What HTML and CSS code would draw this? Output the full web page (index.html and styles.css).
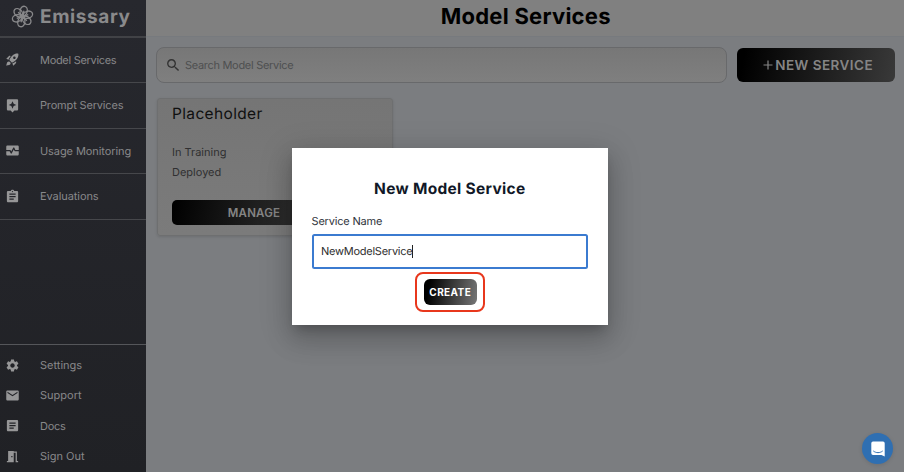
FILE: index.html
```html
<!DOCTYPE html>
<html lang="en">
<head>
<meta charset="utf-8">
<title>Emissary</title>
<link rel="stylesheet" href="styles.css">
</head>
<body>
<div class="app">
  <aside class="sidebar">
    <div class="brand">
      <svg class="logo" viewBox="0 0 24 24" fill="none" stroke="currentColor" stroke-width="1.4">
        <g id="petals">
          <ellipse cx="12" cy="6" rx="3.7" ry="4.900" transform="rotate(12 12 12)"/>
          <ellipse cx="12" cy="6" rx="3.7" ry="4.900" transform="rotate(72 12 12)"/>
          <ellipse cx="12" cy="6" rx="3.7" ry="4.900" transform="rotate(132 12 12)"/>
          <ellipse cx="12" cy="6" rx="3.7" ry="4.900" transform="rotate(192 12 12)"/>
          <ellipse cx="12" cy="6" rx="3.7" ry="4.900" transform="rotate(252 12 12)"/>
          <ellipse cx="12" cy="6" rx="3.7" ry="4.900" transform="rotate(312 12 12)"/>
        </g>
        <path d="M12 12L13.6 6M12 12L18 10M12 12L16.500 16.500M12 12L10.4 18M12 12L6 14M12 12L7.500 7.500"/>
        <circle cx="12" cy="12" r="1.7" fill="currentColor"/>
      </svg>
      <span class="brand-name">Emissary</span>
    </div>
    <nav class="nav">
      <a class="nav-item"><svg class="icon" viewBox="0 0 24 24"><path d="M9.19 6.35c-2.04 2.29-3.44 5.58-3.57 5.89L2 10.69l4.05-4.05c.47-.47 1.15-.68 1.81-.55l1.33.26zM11.17 17s3.74-1.55 5.89-3.7c5.4-5.4 4.5-9.62 4.21-10.57-.95-.3-5.17-1.19-10.57 4.21C8.55 9.09 7 12.83 7 12.83L11.17 17zm6.48-2.19c-2.29 2.04-5.58 3.44-5.89 3.57L13.31 22l4.05-4.05c.47-.47.68-1.15.55-1.81l-.26-1.33zM9 18c0 .83-.34 1.58-.88 2.12C6.94 21.3 2 22 2 22s.7-4.94 1.88-6.12C4.42 15.34 5.17 15 6 15c1.66 0 3 1.34 3 3zm4-9c0-1.1.9-2 2-2s2 .9 2 2-.9 2-2 2-2-.9-2-2z"/></svg><span class="label l-model">Model Services</span></a>
      <a class="nav-item"><svg class="icon" viewBox="0 0 24 24"><path d="M19 2H5c-1.1 0-2 .9-2 2v14c0 1.1.9 2 2 2h4l3 3 3-3h4c1.1 0 2-.9 2-2V4c0-1.1-.9-2-2-2zm-5.12 10.88L12 17l-1.88-4.12L6 11l4.12-1.88L12 5l1.88 4.12L18 11l-4.12 1.88z"/></svg><span class="label l-prompt">Prompt Services</span></a>
      <a class="nav-item"><svg class="icon" viewBox="0 0 24 24"><path d="M15.11 12.45 14 10.24l-3.11 6.21c-.16.34-.51.55-.89.55s-.73-.21-.89-.55L7.38 13H2v5c0 1.1.9 2 2 2h16c1.1 0 2-.9 2-2v-5h-6c-.38 0-.73-.21-.89-.55z"/><path d="M20 4H4c-1.1 0-2 .9-2 2v5h6c.38 0 .73.21.89.55L10 13.76l3.11-6.21c.34-.68 1.45-.68 1.79 0L16.62 11H22V6c0-1.1-.9-2-2-2z"/></svg><span class="label l-usage">Usage Monitoring</span></a>
      <a class="nav-item"><svg class="icon" viewBox="0 0 24 24"><path d="M19 3h-4.18C14.4 1.84 13.3 1 12 1c-1.3 0-2.4.84-2.82 2H5c-1.1 0-2 .9-2 2v14c0 1.1.9 2 2 2h14c1.1 0 2-.9 2-2V5c0-1.1-.9-2-2-2zm-7 0c.55 0 1 .45 1 1s-.45 1-1 1-1-.45-1-1 .45-1 1-1zm2 14H7v-2h7v2zm3-4H7v-2h10v2zm0-4H7V7h10v2z"/></svg><span class="label l-eval">Evaluations</span></a>
    </nav>
    <nav class="footer-nav">
      <a class="foot-item"><svg class="icon" viewBox="0 0 24 24"><path d="M19.14 12.94c.04-.3.06-.61.06-.94 0-.32-.02-.64-.07-.94l2.03-1.58c.18-.14.23-.41.12-.61l-1.92-3.32c-.12-.22-.37-.29-.59-.22l-2.39.96c-.5-.38-1.03-.7-1.62-.94l-.36-2.54c-.04-.24-.24-.41-.48-.41h-3.84c-.24 0-.43.17-.47.41l-.36 2.54c-.59.24-1.13.57-1.62.94l-2.39-.96c-.22-.08-.47 0-.59.22L2.74 8.87c-.12.21-.08.47.12.61l2.03 1.58c-.05.3-.09.63-.09.94s.02.64.07.94l-2.03 1.58c-.18.14-.23.41-.12.61l1.92 3.32c.12.22.37.29.59.22l2.39-.96c.5.38 1.03.7 1.62.94l.36 2.54c.05.24.24.41.48.41h3.84c.24 0 .44-.17.47-.41l.36-2.54c.59-.24 1.13-.56 1.62-.94l2.39.96c.22.08.47 0 .59-.22l1.92-3.32c.12-.22.07-.47-.12-.61l-2.01-1.58zM12 15.6c-1.98 0-3.6-1.62-3.6-3.6s1.62-3.6 3.6-3.6 3.6 1.62 3.6 3.6-1.62 3.6-3.6 3.6z"/></svg><span class="label l-settings">Settings</span></a>
      <a class="foot-item"><svg class="icon" viewBox="0 0 24 24"><path d="M20 4H4c-1.1 0-1.99.9-1.99 2L2 18c0 1.1.9 2 2 2h16c1.1 0 2-.9 2-2V6c0-1.1-.9-2-2-2zm0 4-8 5-8-5V6l8 5 8-5v2z"/></svg><span class="label l-support">Support</span></a>
      <a class="foot-item"><svg class="icon" viewBox="0 0 24 24"><path d="M19 3H5c-1.1 0-2 .9-2 2v14c0 1.1.9 2 2 2h14c1.1 0 2-.9 2-2V5c0-1.1-.9-2-2-2zm-5 14H7v-2h7v2zm3-4H7v-2h10v2zm0-4H7V7h10v2z"/></svg><span class="label l-docs">Docs</span></a>
      <a class="foot-item"><svg class="icon" viewBox="0 0 24 24"><path d="M14 6v15H3v-2h2V3h9v1h5v15h2v2h-4V6h-3zm-4 5v2h2v-2h-2z"/></svg><span class="label l-sign">Sign Out</span></a>
    </nav>
  </aside>
  <main class="main">
    <header class="topbar"><h1 class="page-title">Model Services</h1></header>
    <div class="toolbar">
      <div class="search">
        <svg class="search-icon" viewBox="0 0 24 24"><path d="M15.5 14h-.79l-.28-.27C15.41 12.59 16 11.11 16 9.5 16 5.91 13.09 3 9.5 3S3 5.91 3 9.5 5.91 16 9.5 16c1.61 0 3.09-.59 4.23-1.57l.27.28v.79l5 4.99L20.49 19l-4.99-5zm-6 0C7.01 14 5 11.99 5 9.5S7.01 5 9.5 5 14 7.01 14 9.5 11.99 14 9.5 14z"/></svg>
        <span class="placeholder">Search Model Service</span>
      </div>
      <button class="new-service"><svg class="plus" viewBox="0 0 10 10"><path d="M5 .5v9M.5 5h9"/></svg><span class="new-label">NEW SERVICE</span></button>
    </div>
    <section class="card">
      <h2 class="card-title">Placeholder</h2>
      <p class="status s-training">In Training</p>
      <p class="status s-deployed">Deployed</p>
      <button class="manage"><span>MANAGE</span></button>
    </section>
  </main>
</div>
<div class="modal">
  <h2 class="modal-title">New Model Service</h2>
  <div class="field-label">Service Name</div>
  <div class="field"><span class="value">NewModelService</span><span class="caret"></span></div>
  <div class="highlight"><button class="create">CREATE</button></div>
</div>
<div class="chat">
  <svg class="chat-icon" viewBox="0 0 14 16"><path class="bubble" d="M2 .5h10a1.7 1.7 0 0 1 1.7 1.7V15.500L10.500 14H2A1.700 1.700 0 0 1 .3 12.300V2.200A1.700 1.700 0 0 1 2 .5z"/><path class="smile" d="M2.600 10.200c2.500 2 6.300 2 8.800 0"/></svg>
</div>
</body>
</html>
```
FILE: styles.css
```css
* { box-sizing: border-box; }
body {
  margin: 0;
  width: 904px;
  height: 472px;
  overflow: hidden;
  font-family: Inter, "Open Sans", sans-serif;
  font-size: 11px;
  text-rendering: geometricPrecision;
  background: #7b7d80;
}
h1, h2, p { margin: 0; }
button { border: 0; padding: 0; font-family: inherit; }
svg { display: block; flex: none; }

.app { display: flex; height: 472px; }
.sidebar {
  width: 145.5px;
  flex: none;
  display: flex;
  flex-direction: column;
  background: linear-gradient(#27282e, #202125);
  color: #88888a;
}
.brand {
  height: 37.5px;
  display: flex;
  align-items: center;
  padding: 0 0 3px 10.500px;
  border-bottom: 2px solid #414246;
}
.logo { width: 23px; height: 23px; }
.brand-name { margin-left: 6.500px; font-size: 19px; font-weight: 700; letter-spacing: .6px; color: #8a8a8b; }
.nav-item {
  height: 45.5px;
  display: flex;
  align-items: center;
  padding-left: 4.500px;
  border-bottom: 1px solid #46474b;
}
.icon { width: 15px; height: 15px; fill: #969697; }
.label { margin-left: 20.500px; white-space: nowrap; font-weight: 400; }
.l-model { letter-spacing: -.3px; }
.l-prompt { letter-spacing: -.16px; }
.l-usage, .l-eval { letter-spacing: -.08px; }
.l-docs { letter-spacing: -.3px; }
.footer-nav { margin-top: auto; height: 128px; border-top: 1px solid #55565a; padding-top: 5px; }
.foot-item { height: 30.3px; display: flex; align-items: center; padding-left: 4.500px; }

.main { flex: 1; min-width: 0; }
.topbar {
  height: 37px;
  display: flex;
  justify-content: center;
  align-items: center;
  padding: 0 0 2px 2px;
  background: #808080;
  border-bottom: 1px solid #777a7e;
}
.page-title { font-size: 22px; line-height: 28px; font-weight: 700; letter-spacing: .25px; color: #000; white-space: nowrap; }
.toolbar { display: flex; align-items: center; gap: 10px; padding: 10px 8.500px 0 10.900px; }
.search {
  width: 570.500px;
  height: 36px;
  display: flex;
  align-items: center;
  padding-left: 7.500px;
  border: 1px solid #68696b;
  border-radius: 8px;
  background: linear-gradient(#777777, #7f7f7f);
}
.search-icon { width: 16.500px; height: 16.500px; fill: #333; }
.placeholder { margin-left: 3.500px; color: #4e4f50; white-space: nowrap; letter-spacing: -.29px; }
.new-service {
  width: 158.500px;
  height: 33.500px;
  display: flex;
  align-items: center;
  justify-content: center;
  gap: 2px;
  padding-left: 4px;
  border-radius: 6px;
  background: linear-gradient(100deg, #000 5%, #393939);
  color: #858585;
}
.plus { width: 10px; height: 10px; stroke: #858585; stroke-width: 1.2; fill: none; }
.new-label { font-size: 13.500px; font-weight: 600; letter-spacing: .45px; white-space: nowrap; }
.card {
  width: 236.500px;
  height: 138px;
  margin: 15px 0 0 11px;
  padding: 5px 15px 0 14.500px;
  border: 1px solid #6e6f70;
  border-radius: 3px;
  background: linear-gradient(#757575, #7b7b7b);
  box-shadow: 0 1px 3px rgba(0, 0, 0, .12);
}
.card-title { font-size: 15.500px; line-height: 20px; font-weight: 400; letter-spacing: .35px; color: #101010; }
.status { line-height: 20px; color: #303031; }
.s-training { margin-top: 18px; }
.manage {
  width: 164px;
  height: 25px;
  margin-top: 18px;
  border-radius: 5px;
  background: linear-gradient(100deg, #000, #2b2b2b 70%);
  color: #858585;
  font-size: 11.500px;
  font-weight: 600;
  letter-spacing: .2px;
}

.modal {
  position: absolute;
  left: 291.500px;
  top: 148px;
  width: 316.500px;
  height: 177px;
  padding: 30px 20px 0;
  display: flex;
  flex-direction: column;
  background: #fff;
  box-shadow: 0 7px 10px -4px rgba(0, 0, 0, .2), 0 15px 24px 2px rgba(0, 0, 0, .14), 0 6px 29px 5px rgba(0, 0, 0, .12);
}
.modal-title { font-size: 15.500px; line-height: 22px; font-weight: 700; letter-spacing: .3px; color: #111827; text-align: center; white-space: nowrap; }
.field-label { margin-top: 11.500px; line-height: 18px; letter-spacing: -.18px; color: #30343c; }
.field {
  height: 35.500px;
  margin-top: 4px;
  display: flex;
  align-items: center;
  padding-left: 7.500px;
  border: 2px solid #3b7bd0;
  border-radius: 2.500px;
  color: #2f2f2f;
}
.value { letter-spacing: -.25px; }
.caret { width: 1px; height: 13px; background: #222; }
.highlight {
  width: 70px;
  height: 40px;
  margin-top: 3px;
  position: relative;
  left: .5px;
  align-self: center;
  display: flex;
  align-items: center;
  justify-content: center;
  border: 2px solid #e8371c;
  border-radius: 8px;
}
.create {
  width: 53px;
  height: 26px;
  border-radius: 6px;
  background: linear-gradient(100deg, #000 10%, #777);
  color: #fff;
  font-size: 10px;
  font-weight: 700;
  letter-spacing: .4px;
}
.chat {
  position: absolute;
  left: 862px;
  top: 433px;
  width: 31px;
  height: 31px;
  display: flex;
  align-items: center;
  justify-content: center;
  border-radius: 50%;
  background: #2f6fb2;
  box-shadow: 0 1px 4px rgba(0, 0, 0, .12);
}
.chat-icon { width: 14px; height: 16px; }
.bubble { fill: #fff; }
.smile { fill: none; stroke: #2f6fb2; stroke-width: 1; stroke-linecap: round; }
```
